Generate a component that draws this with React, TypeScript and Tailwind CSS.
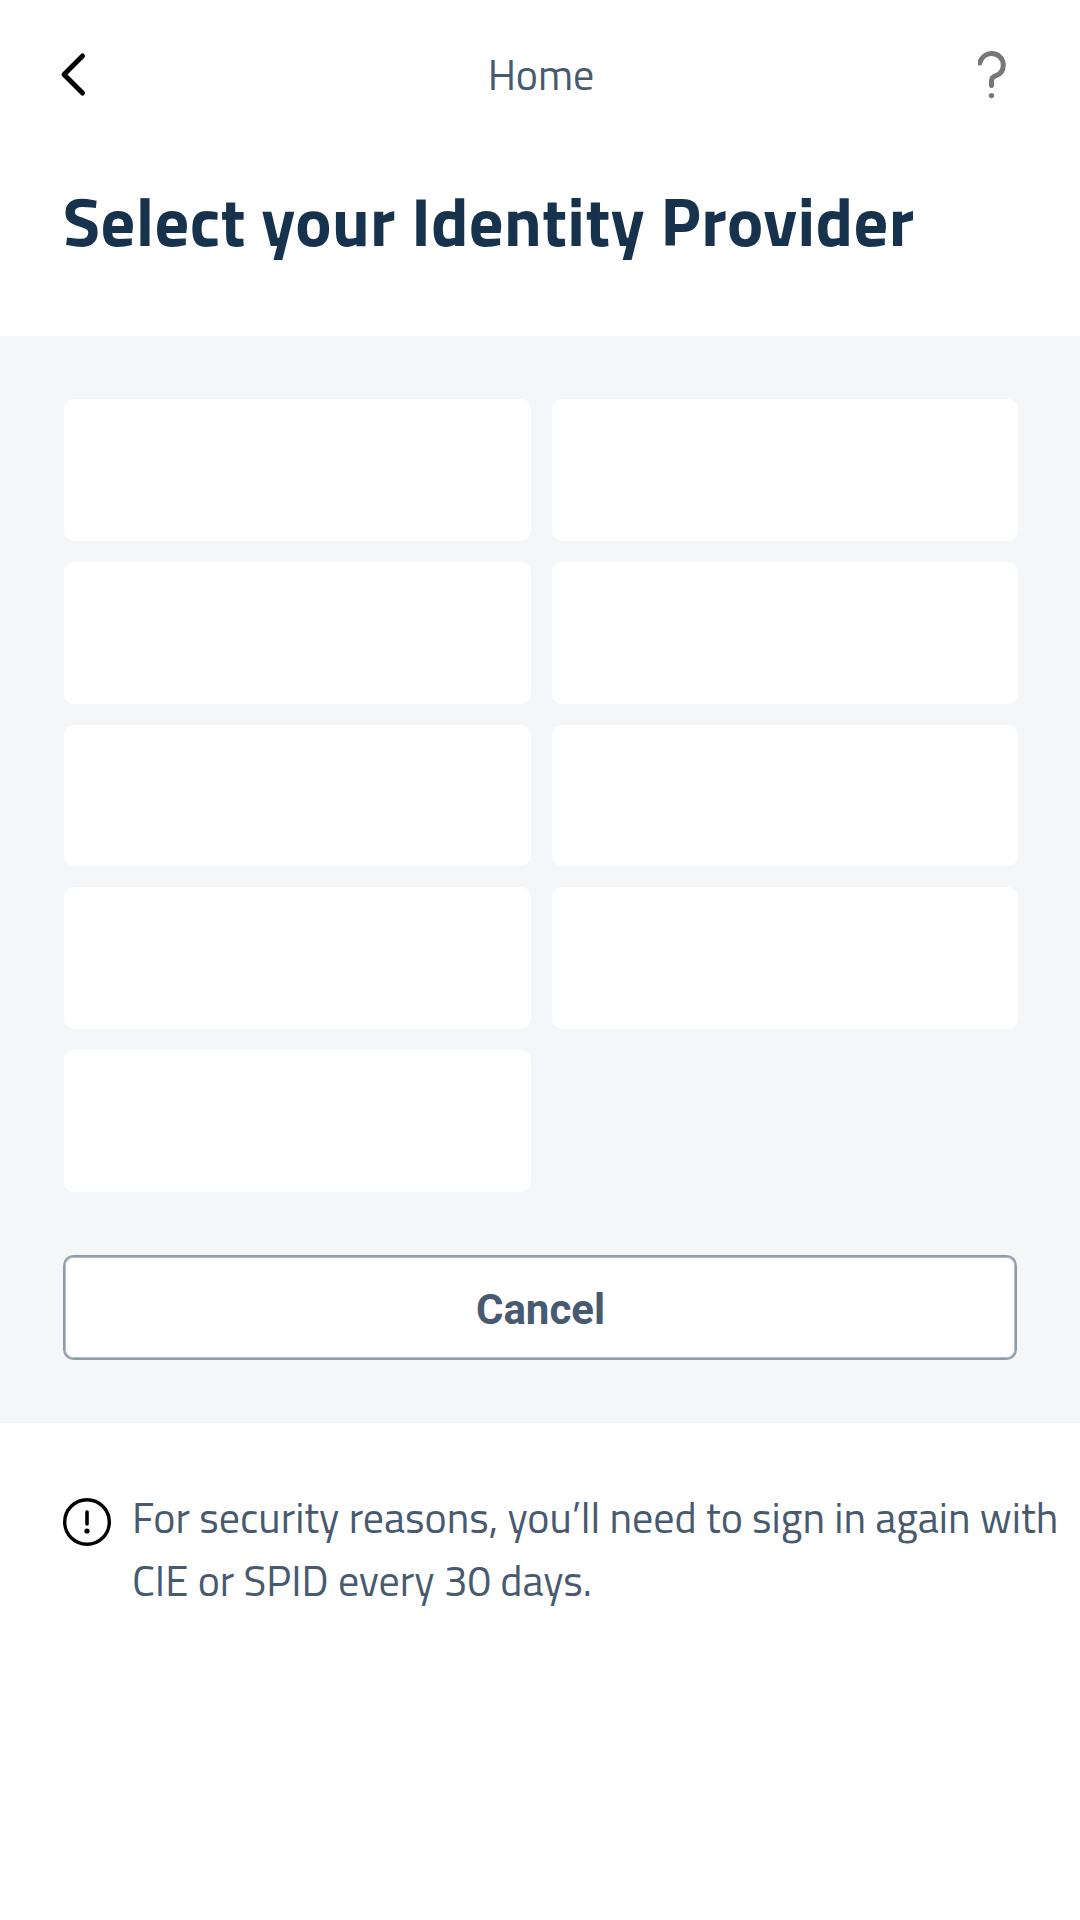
const providers = Array.from({ length: 9 }, (_, i) => i);

export default function App() {
  return (
    <main className="flex h-[1920px] w-[1080px] flex-col overflow-hidden bg-white font-['Titillium_Web','Roboto',sans-serif] text-[#475a70]">
      <header className="grid h-[150px] shrink-0 grid-cols-3 items-center px-[58px]">
        <button aria-label="Back" className="justify-self-start">
          <svg className="block h-[48px] w-[32px]" viewBox="0 0 32 48" fill="none" stroke="#000" strokeWidth="5" strokeLinecap="round" strokeLinejoin="round">
            <path d="M24.5 5L6 23.5L24.5 42" />
          </svg>
        </button>
        <div className="justify-self-center pb-[3px] pl-[2px] text-[42px] leading-none whitespace-nowrap">Home</div>
        <button aria-label="Help" className="justify-self-end">
          <svg className="block h-[52px] w-[44px]" viewBox="0 0 44 52" fill="none">
            <path d="M1.7 14C3.4 8.3 8 4.6 13.5 4.6C20.5 4.6 25.3 9.8 25.3 15.9C25.3 21.4 22 25.4 17.5 26.9C14.8 27.8 13.5 29 13.5 32V36.5" stroke="#777" strokeWidth="5" strokeLinecap="round" />
            <circle cx="13.5" cy="46.6" r="2.7" fill="#777" />
          </svg>
        </button>
      </header>
      <h1 className="h-[186px] shrink-0 pt-[32px] pl-[63px] text-[68.25px] font-bold leading-[78px] tracking-[0.4px] whitespace-nowrap text-[#17324d]">Select your Identity Provider</h1>
      <section className="h-[1087px] shrink-0 bg-[#f4f6f8] px-[63px] pt-[63px]">
        <div className="grid grid-cols-[467px_466px] gap-[21px] pl-px">
          {providers.map((id) => (
            <div key={id} className="h-[141.75px] rounded-[10.5px] bg-white" />
          ))}
        </div>
        <button className="mt-[63px] flex h-[105px] w-[954px] items-center justify-center rounded-[10.5px] border-2 border-[#8f9dab] bg-white pt-[6px] pl-px font-['Roboto',sans-serif] text-[42px] font-bold leading-none shadow-[inset_0_0_0_1px_#b4bec7]">Cancel</button>
      </section>
      <div className="flex gap-[21px] pt-[65px] pl-[63px]">
        <svg className="mt-[10px] h-[48px] w-[48px] shrink-0" viewBox="0 0 48 48" fill="none" stroke="#000" strokeLinecap="round">
          <circle cx="24" cy="24" r="22.3" strokeWidth="3.4" />
          <path d="M24 14V26" strokeWidth="3.6" />
          <circle cx="24" cy="33" r="2.6" fill="#000" stroke="none" />
        </svg>
        <p className="-mt-[2px] text-[42px] leading-[63px] whitespace-nowrap">
          For security reasons, you’ll need to sign in again with
          <br />
          CIE or SPID every 30 days.
        </p>
      </div>
    </main>
  );
}
